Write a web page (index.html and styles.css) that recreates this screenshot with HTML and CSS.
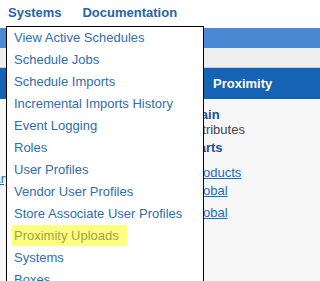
FILE: index.html
```html
<!DOCTYPE html>
<html>
<head>
<meta charset="utf-8">
<link rel="stylesheet" href="styles.css">
</head>
<body>
<div class="page">
  <header class="topnav">
    <a class="nav-link">Systems</a>
    <a class="nav-link">Documentation</a>
  </header>
  <div class="bar-light"></div>
  <div class="bar-gray"></div>
  <div class="bar-dark"><span class="band-title">Proximity</span></div>
  <main class="content">
    <div class="left-col">
      <a class="link sum">Summary</a>
    </div>
    <div class="right-col">
      <div class="line strong">Main</div>
      <div class="line muted">Attributes</div>
      <div class="line strong gap1">Parts</div>
      <a class="line link l1">Products</a>
      <a class="line link l2">Global</a>
      <a class="line link l3">Global</a>
    </div>
  </main>
  <ul class="menu">
    <li class="item">View Active Schedules</li>
    <li class="item">Schedule Jobs</li>
    <li class="item">Schedule Imports</li>
    <li class="item">Incremental Imports History</li>
    <li class="item">Event Logging</li>
    <li class="item">Roles</li>
    <li class="item">User Profiles</li>
    <li class="item">Vendor User Profiles</li>
    <li class="item">Store Associate User Profiles</li>
    <li class="item"><span class="hl">Proximity Uploads</span></li>
    <li class="item">Systems</li>
    <li class="item">Boxes</li>
  </ul>
</div>
</body>
</html>
```

FILE: styles.css
```css
html, body {
  margin: 0;
  padding: 0;
  overflow: hidden;
  background: #f7f7f7;
  font-family: "Liberation Sans", Arial, sans-serif;
  font-size: 13px;
}
.page {
  position: relative;
  height: 281px;
  overflow: hidden;
}
.topnav {
  height: 28px;
  background: #ffffff;
  display: flex;
  gap: 21px;
  padding-left: 8px;
  line-height: 26px;
}
.nav-link {
  font-weight: bold;
  color: #2862aa;
}
.bar-light {
  height: 20px;
  background: #4c88d3;
}
.bar-gray {
  height: 19px;
  background: #eeeeee;
  border-bottom: 1px solid #cfcfcf;
}
.bar-dark {
  height: 31px;
  background: #1563b5;
  line-height: 31px;
  white-space: nowrap;
}
.band-title {
  margin-left: 213px;
  color: #ffffff;
  font-weight: bold;
}
.content {
  display: flex;
  white-space: nowrap;
}
.left-col {
  width: 190px;
  flex: none;
  padding-top: 72px;
  line-height: 15px;
}
.sum {
  display: block;
  margin-left: -44px;
}
.right-col {
  display: flex;
  flex-direction: column;
  align-items: flex-start;
  padding-top: 8px;
  line-height: 15px;
}
.line {
  display: block;
}
.strong {
  font-weight: bold;
  color: #1d4f8c;
}
.muted {
  color: #444444;
}
.gap1 { margin-top: 3px; }
.link {
  color: #1a6cc0;
  text-decoration: underline;
}
.l1 { margin-top: 10px; }
.l2 { margin-top: 3px; }
.l3 { margin-top: 7px; }
.menu {
  position: absolute;
  top: 26px;
  bottom: 0;
  left: 6px;
  width: 196px;
  margin: 0;
  padding: 0;
  overflow: hidden;
  list-style: none;
  background: #ffffff;
  border: 1px solid #000000;
  border-bottom: none;
}
.item {
  height: 22px;
  line-height: 22px;
  padding-left: 7px;
  color: #2f6cb4;
  white-space: nowrap;
}
.hl {
  display: inline-block;
  height: 21px;
  line-height: 21px;
  vertical-align: top;
  margin-left: -2px;
  padding: 0 8px 0 2px;
  background: #ffff7f;
  color: #9ea24c;
}
```
